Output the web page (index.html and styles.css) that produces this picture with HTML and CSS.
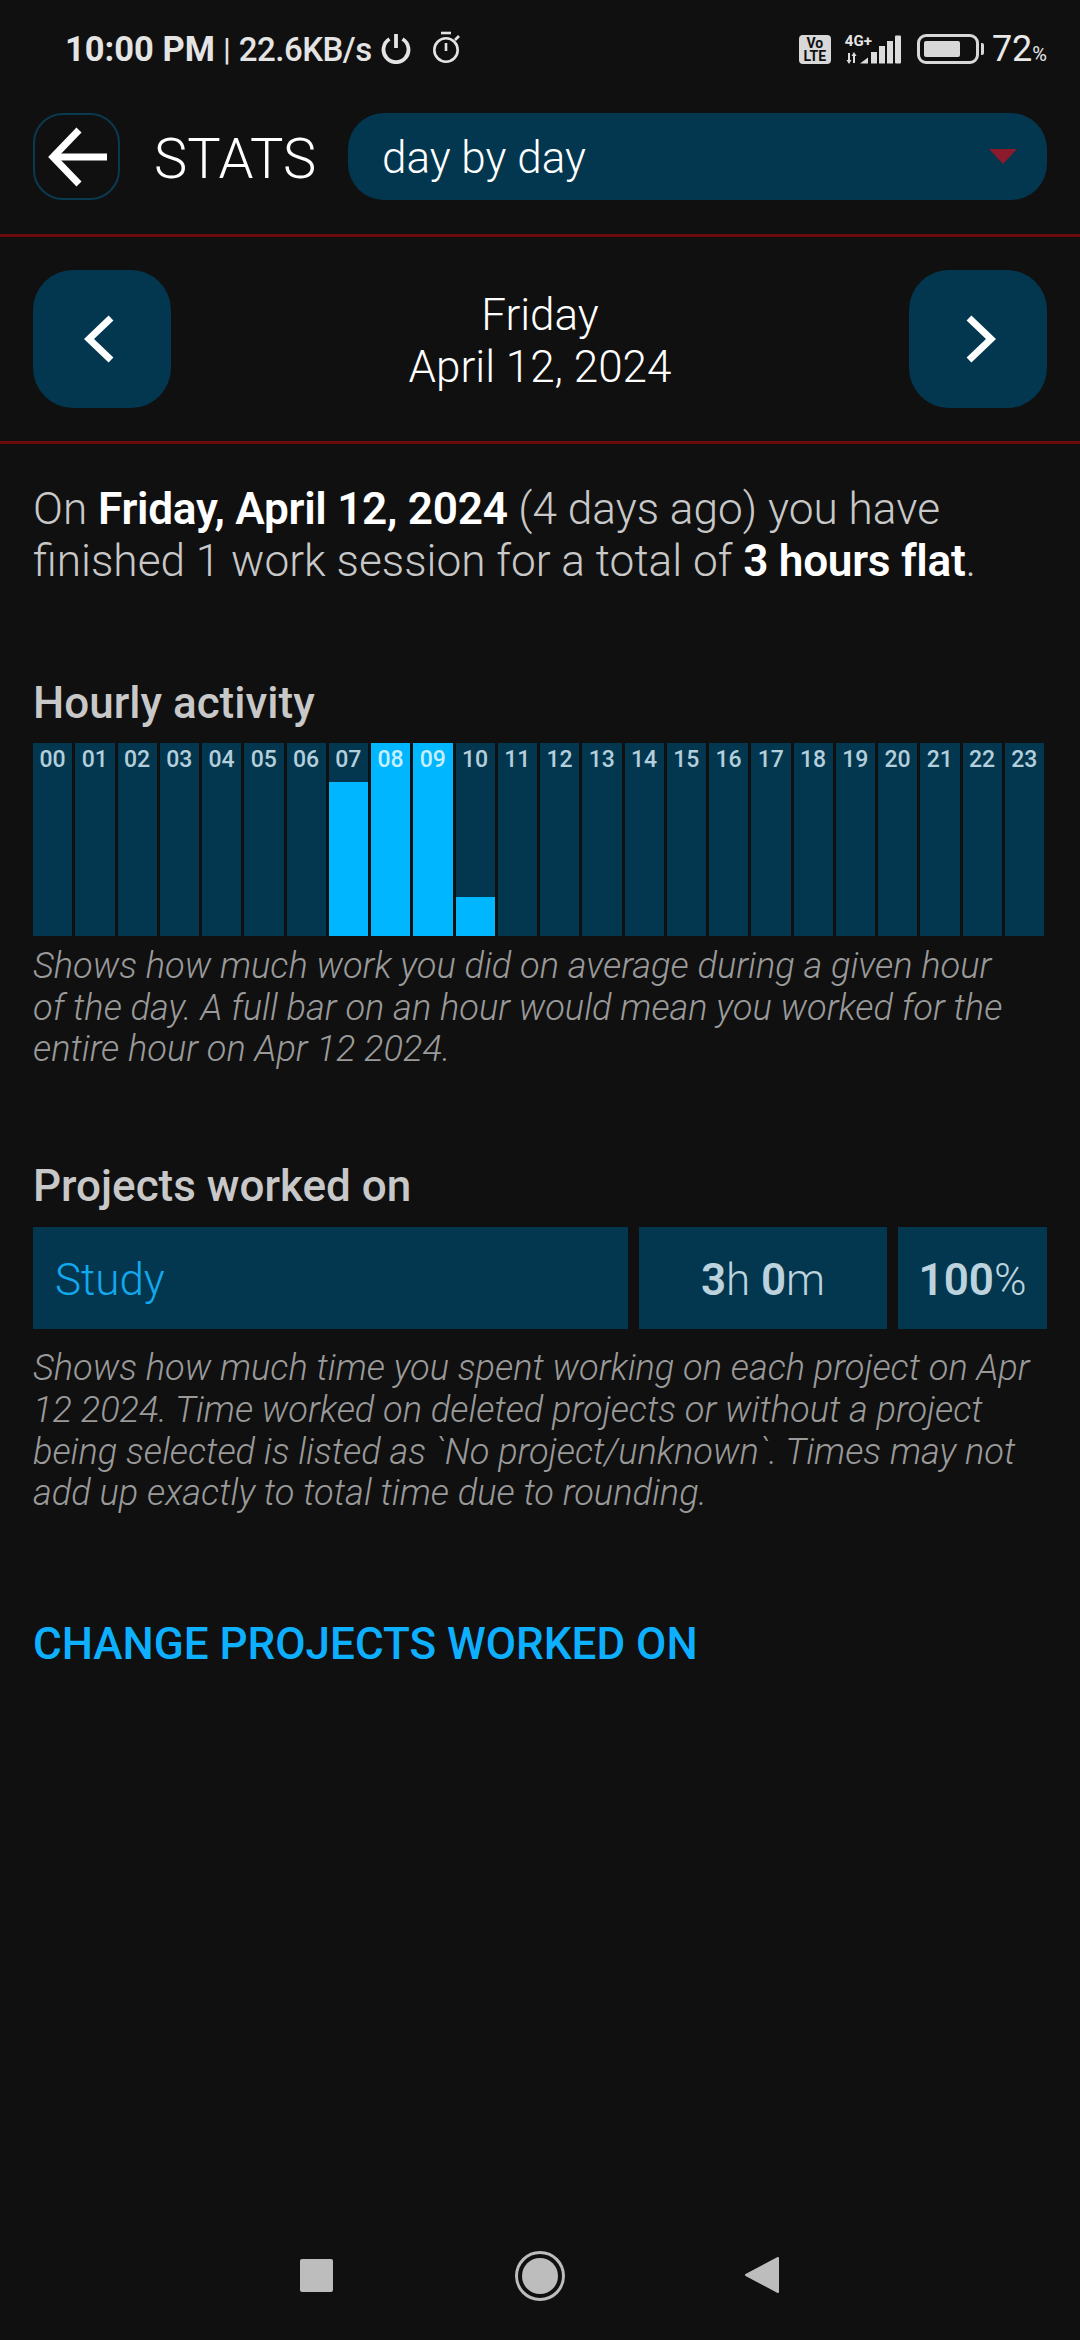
FILE: index.html
```html
<!DOCTYPE html>
<html lang="en">

<head>
    <meta charset="UTF-8">
    <meta name="viewport" content="width=device-width, initial-scale=1.0">
    <title>Stats</title>
    <link rel="stylesheet" href="styles.css">
</head>

<body>
    <div class="status-bar">
        <div class="status-left">
            <span class="status-clock">10:00 PM</span>
            <span class="status-sep">|</span>
            <span class="status-speed">22.6KB/s</span>
            <svg class="status-icon" width="30" height="30" viewBox="0 0 30 30" fill="none" stroke="#e4e4e4" stroke-width="3.800">
                <path d="M8.500 5a12.500 12.500 0 1 0 13 0"/>
                <path d="M15 0v14"/>
            </svg>
            <svg class="status-icon timer" width="29" height="33" viewBox="0 0 29 33" fill="none" stroke="#e4e4e4" stroke-width="2.600">
                <path d="M9 2h10"/>
                <circle cx="14" cy="19" r="11.700"/>
                <path d="M14 12v8"/>
                <path d="M23 9l4-4"/>
            </svg>
        </div>
        <div class="status-right">
            <span class="volte">Vo<br>LTE</span>
            <span class="network">
                <span class="network-type">4G+</span>
                <svg width="13" height="12" viewBox="0 0 13 12" fill="#dcdcdc">
                    <path d="M3 1h2v7h1.500L4 12 1.500 8H3z"/>
                    <path d="M8 11h2V4h1.500L9 0 6.500 4H8z"/>
                </svg>
            </span>
            <svg class="signal" width="41" height="29" viewBox="0 0 41 29" fill="#dcdcdc">
                <path d="M0 28.500l8-6v6z"/>
                <rect x="11" y="17" width="6" height="11.500"/>
                <rect x="19" y="11" width="6" height="17.500"/>
                <rect x="27" y="6" width="6" height="22.500"/>
                <rect x="35" y="0.500" width="6" height="28" rx="1"/>
            </svg>
            <span class="battery"><span class="battery-fill"></span></span>
            <span class="battery-tip"></span>
            <span class="battery-level">72<small>%</small></span>
        </div>
    </div>

    <div class="header">
        <button type="button" class="back-btn">
            <svg width="62" height="62" viewBox="0 0 62 62" fill="none" stroke="#ffffff" stroke-width="7">
                <path d="M33 4L7 31l26 27"/>
                <path d="M7 31h54"/>
            </svg>
        </button>
        <span class="page-title">STATS</span>
        <div class="dropdown">
            <span>day by day</span>
            <span class="dropdown-arrow"></span>
        </div>
    </div>

    <div class="date-nav">
        <button type="button" class="nav-btn prev">
            <svg width="30" height="48" viewBox="0 0 30 48" fill="none" stroke="#ffffff" stroke-width="7">
                <path d="M27 3L5 24l22 21"/>
            </svg>
        </button>
        <div class="date-label">Friday<br>April 12, 2024</div>
        <button type="button" class="nav-btn next">
            <svg width="30" height="48" viewBox="0 0 30 48" fill="none" stroke="#ffffff" stroke-width="7">
                <path d="M3 3l22 21L3 45"/>
            </svg>
        </button>
    </div>

    <div class="content">
        <p class="summary">On <b>Friday, April 12, 2024</b> (4 days ago) you have finished 1 work session for a total of <b>3 hours flat</b>.</p>

        <h2 class="section-title hourly-title">Hourly activity</h2>
        <div class="hours">
            <div class="hour"><span>00</span></div>
            <div class="hour"><span>01</span></div>
            <div class="hour"><span>02</span></div>
            <div class="hour"><span>03</span></div>
            <div class="hour"><span>04</span></div>
            <div class="hour"><span>05</span></div>
            <div class="hour"><span>06</span></div>
            <div class="hour"><div class="hour-fill" style="height: 80%"></div><span>07</span></div>
            <div class="hour active"><div class="hour-fill" style="height: 100%"></div><span>08</span></div>
            <div class="hour active"><div class="hour-fill" style="height: 100%"></div><span>09</span></div>
            <div class="hour"><div class="hour-fill" style="height: 20%"></div><span>10</span></div>
            <div class="hour"><span>11</span></div>
            <div class="hour"><span>12</span></div>
            <div class="hour"><span>13</span></div>
            <div class="hour"><span>14</span></div>
            <div class="hour"><span>15</span></div>
            <div class="hour"><span>16</span></div>
            <div class="hour"><span>17</span></div>
            <div class="hour"><span>18</span></div>
            <div class="hour"><span>19</span></div>
            <div class="hour"><span>20</span></div>
            <div class="hour"><span>21</span></div>
            <div class="hour"><span>22</span></div>
            <div class="hour"><span>23</span></div>
        </div>
        <p class="note">Shows how much work you did on average during a given hour of the day. A full bar on an hour would mean you worked for the entire hour on Apr 12 2024.</p>

        <h2 class="section-title projects-title">Projects worked on</h2>
        <div class="project-row">
            <div class="project-name">Study</div>
            <div class="project-time"><b>3</b>h <b>0</b>m</div>
            <div class="project-share"><b>100</b>%</div>
        </div>
        <p class="note">Shows how much time you spent working on each project on Apr 12 2024. Time worked on deleted projects or without a project being selected is listed as `No project/unknown`. Times may not add up exactly to total time due to rounding.</p>

        <a class="change-link">CHANGE PROJECTS WORKED ON</a>
    </div>

    <div class="nav-bar">
        <span class="nav-square"></span>
        <span class="nav-circle"><span></span></span>
        <svg width="36" height="38" viewBox="0 0 36 38" fill="#bdbdbd" stroke="#bdbdbd" stroke-width="2" stroke-linejoin="round">
            <path d="M34 2v34L2 19z"/>
        </svg>
    </div>
</body>

</html>
```

FILE: styles.css
```css
* {
    box-sizing: border-box;
}

body {
    width: 1080px;
    height: 2340px;
    margin: 0;
    display: flex;
    flex-direction: column;
    background-color: #101010;
    color: #ffffff;
    font-family: Roboto, "Liberation Sans", sans-serif;
    overflow: hidden;
}

/* status bar */
.status-bar {
    height: 100px;
    padding: 30px 33px 0 65px;
    display: flex;
    justify-content: space-between;
    align-items: flex-start;
    color: #e4e4e4;
}

.status-left,
.status-right {
    display: flex;
    align-items: center;
    height: 38px;
}

.status-clock {
    font-size: 34.500px;
    font-weight: 700;
}

.status-sep {
    margin: 0 8px;
    font-size: 32px;
    font-weight: 400;
}

.status-speed {
    font-size: 33px;
    font-weight: 500;
    letter-spacing: -0.5px;
}

.status-icon {
    margin-left: 9px;
}

.status-icon.timer {
    margin-left: 21px;
    margin-top: -4px;
}

.volte {
    width: 32px;
    height: 29px;
    border-radius: 4px;
    background-color: #d8d8d8;
    color: #101010;
    font-size: 14px;
    font-weight: 700;
    line-height: 13px;
    text-align: center;
    padding-top: 2px;
}

.network {
    margin-left: 14px;
    display: flex;
    flex-direction: column;
    gap: 4px;
}

.network-type {
    font-size: 15px;
    font-weight: 700;
    line-height: 13px;
}

.signal {
    margin-left: -12px;
}

.battery {
    margin-left: 16px;
    width: 62px;
    height: 30px;
    border: 3px solid #d8d8d8;
    border-radius: 9px;
    padding: 4px;
    display: flex;
}

.battery-fill {
    width: 36px;
    background-color: #d8d8d8;
    border-radius: 2px;
}

.battery-tip {
    margin-left: 2px;
    width: 3px;
    height: 12px;
    background-color: #d8d8d8;
    border-radius: 0 2px 2px 0;
}

.battery-level {
    margin-left: 8px;
    font-size: 36px;
    color: #e8e8e8;
}

.battery-level small {
    font-size: 20px;
}

/* header */
.header {
    height: 137px;
    padding: 13px 33px 0;
    display: flex;
    align-items: flex-start;
    border-bottom: 3px solid #6b0a0c;
}

.back-btn {
    width: 87px;
    height: 87px;
    padding: 0;
    flex: none;
    background: none;
    border: 2px solid #0a3a50;
    border-radius: 30px;
    display: flex;
    align-items: center;
    justify-content: center;
}

.page-title {
    width: 228px;
    flex: none;
    height: 87px;
    padding-left: 34px;
    font-size: 56px;
    font-weight: 300;
    line-height: 92px;
}

.dropdown {
    flex: 1;
    height: 87px;
    padding: 2px 34px 0;
    border-radius: 36px;
    background-color: #03374f;
    display: flex;
    align-items: center;
    justify-content: space-between;
    font-size: 44px;
    font-weight: 300;
}

.dropdown-arrow {
    width: 0;
    height: 0;
    border-left: 14px solid transparent;
    border-right: 14px solid transparent;
    border-top: 15px solid #8a1a2c;
    margin-right: -4px;
    margin-bottom: 2px;
}

/* date selector */
.date-nav {
    height: 207px;
    padding: 33px 33px 0;
    display: flex;
    align-items: flex-start;
    justify-content: space-between;
    border-bottom: 3px solid #6b0a0c;
}

.nav-btn {
    width: 138px;
    height: 138px;
    padding: 0;
    background-color: #03374f;
    border: none;
    border-radius: 40px;
    display: flex;
    align-items: center;
    justify-content: center;
}

.nav-btn.prev {
    padding-right: 6px;
}

.nav-btn.next {
    padding-left: 6px;
}

.date-label {
    padding-top: 19px;
    font-size: 44px;
    font-weight: 300;
    line-height: 52px;
    text-align: center;
}

/* main content */
.content {
    padding: 0 33px;
    flex: 1;
}

.summary {
    margin: 39px 0 0;
    font-size: 44.200px;
    font-weight: 300;
    line-height: 52px;
    color: #c8c8c8;
}

.summary b {
    font-weight: 600;
    letter-spacing: -0.3px;
    color: #ffffff;
}

.section-title {
    margin: 0;
    font-size: 44px;
    font-weight: 500;
    line-height: 52px;
    color: #c8c8c8;
}

.hourly-title {
    margin-top: 90px;
}

.projects-title {
    margin-top: 90px;
}

.hours {
    margin: 14px 3px 0 0;
    height: 193px;
    display: grid;
    grid-template-columns: repeat(24, 1fr);
    gap: 3px;
}

.hour {
    position: relative;
    background-color: #03374f;
    text-align: center;
    font-size: 23px;
    font-weight: 500;
    line-height: 34px;
    color: #b4cfdb;
}

.hour span {
    position: relative;
}

.hour.active {
    color: #c8eeff;
}

.hour-fill {
    position: absolute;
    left: 0;
    right: 0;
    bottom: 0;
    background-color: #00b7ff;
}

.note {
    max-width: 997px;
    margin: 9px 0 0;
    font-size: 36.200px;
    font-style: italic;
    font-weight: 300;
    line-height: 41.700px;
    color: #9a9a9a;
}

.project-row {
    margin-top: 15px;
    height: 102px;
    display: flex;
    gap: 11px;
    font-size: 44px;
    line-height: 106px;
    font-weight: 300;
}

.project-name,
.project-time,
.project-share {
    background-color: #03374f;
}

.project-name {
    flex: 1;
    padding-left: 22px;
    color: #12a8ee;
}

.project-time,
.project-share {
    color: #bcd3de;
    text-align: center;
}

.project-time b,
.project-share b {
    font-weight: 600;
}

.project-time {
    width: 248px;
}

.project-share {
    width: 149px;
}

.project-row + .note {
    margin-top: 18px;
}

.change-link {
    display: block;
    margin-top: 104px;
    font-size: 44px;
    font-weight: 500;
    line-height: 52px;
    color: #0db0ff;
}

/* android nav bar */
.nav-bar {
    height: 81px;
    padding: 0 0 0 300px;
    display: flex;
    align-items: flex-start;
}

.nav-square {
    width: 33px;
    height: 33px;
    border-radius: 2px;
    background-color: #bdbdbd;
}

.nav-circle {
    width: 50px;
    height: 50px;
    margin: -8px 0 0 182px;
    border: 3px solid #bdbdbd;
    border-radius: 50%;
    padding: 4px;
    display: flex;
}

.nav-circle span {
    flex: 1;
    border-radius: 50%;
    background-color: #bdbdbd;
}

.nav-bar svg {
    margin: -3px 0 0 179px;
}
```
